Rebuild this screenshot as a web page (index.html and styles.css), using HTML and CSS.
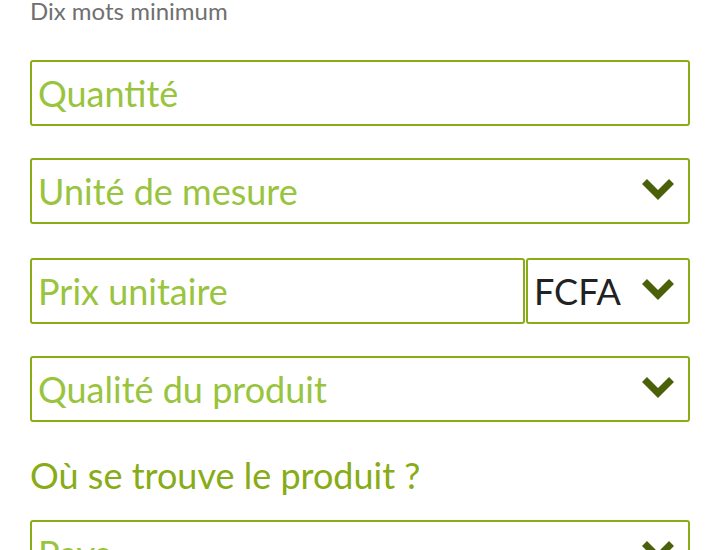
FILE: index.html
```html
<!DOCTYPE html>
<html lang="fr">
<head>
<meta charset="utf-8">
<link rel="stylesheet" href="styles.css">
</head>
<body>
<main class="form">
  <p class="hint">Dix mots minimum</p>
  <div class="field field-quantity"><span class="placeholder">Quantité</span></div>
  <div class="field field-select field-unit"><span class="placeholder">Unité de mesure</span>
    <svg class="chevron" viewBox="0 0 34 24"><path d="M3.5 3.5 L17 17 L30.5 3.5" /></svg>
  </div>
  <div class="price-row">
    <div class="field field-price"><span class="placeholder">Prix unitaire</span></div>
    <div class="field field-select field-currency"><span class="value">FCFA</span>
      <svg class="chevron" viewBox="0 0 34 24"><path d="M3.5 3.5 L17 17 L30.5 3.5" /></svg>
    </div>
  </div>
  <div class="field field-select field-quality"><span class="placeholder">Qualité du produit</span>
    <svg class="chevron" viewBox="0 0 34 24"><path d="M3.5 3.5 L17 17 L30.5 3.5" /></svg>
  </div>
  <h2 class="section-title">Où se trouve le produit ?</h2>
  <div class="field field-select field-country"><span class="placeholder">Pays</span>
    <svg class="chevron" viewBox="0 0 34 24"><path d="M3.5 3.5 L17 17 L30.5 3.5" /></svg>
  </div>
</main>
</body>
</html>
```
FILE: styles.css
```css
html, body {
  margin: 0;
  padding: 0;
  background: #ffffff;
  overflow: hidden;
}
body {
  font-family: Lato, "Open Sans", sans-serif;
}
.form {
  width: 660px;
  margin-left: 30px;
  display: flex;
  flex-direction: column;
}
.hint {
  margin: -6px 0 0 0;
  font-size: 24px;
  line-height: 34px;
  color: #707070;
}
.field {
  box-sizing: border-box;
  height: 66px;
  border: 2px solid #89ad17;
  border-radius: 3px;
  display: flex;
  align-items: center;
  padding: 0 13px 0 6px;
  font-size: 36px;
  background: #fff;
}
.placeholder {
  color: #98c43e;
  flex: 1;
}
.value {
  color: #222222;
  flex: 1;
}
.field-quantity { margin-top: 32px; }
.field-unit { margin-top: 32px; }
.price-row {
  display: flex;
  gap: 1px;
  margin-top: 34px;
}
.field-price { flex: 1; }
.field-currency { width: 164px; }
.field-quality { margin-top: 32px; }
.section-title {
  margin: 28px 0 0 0;
  font-size: 36px;
  font-weight: 400;
  line-height: 50px;
  color: #87ac17;
}
.field-country { margin-top: 20px; }
.chevron {
  width: 34px;
  height: 24px;
  margin-top: -2px;
}
.chevron path {
  fill: none;
  stroke: #4a6009;
  stroke-width: 7;
  stroke-linecap: butt;
  stroke-linejoin: miter;
}
```
